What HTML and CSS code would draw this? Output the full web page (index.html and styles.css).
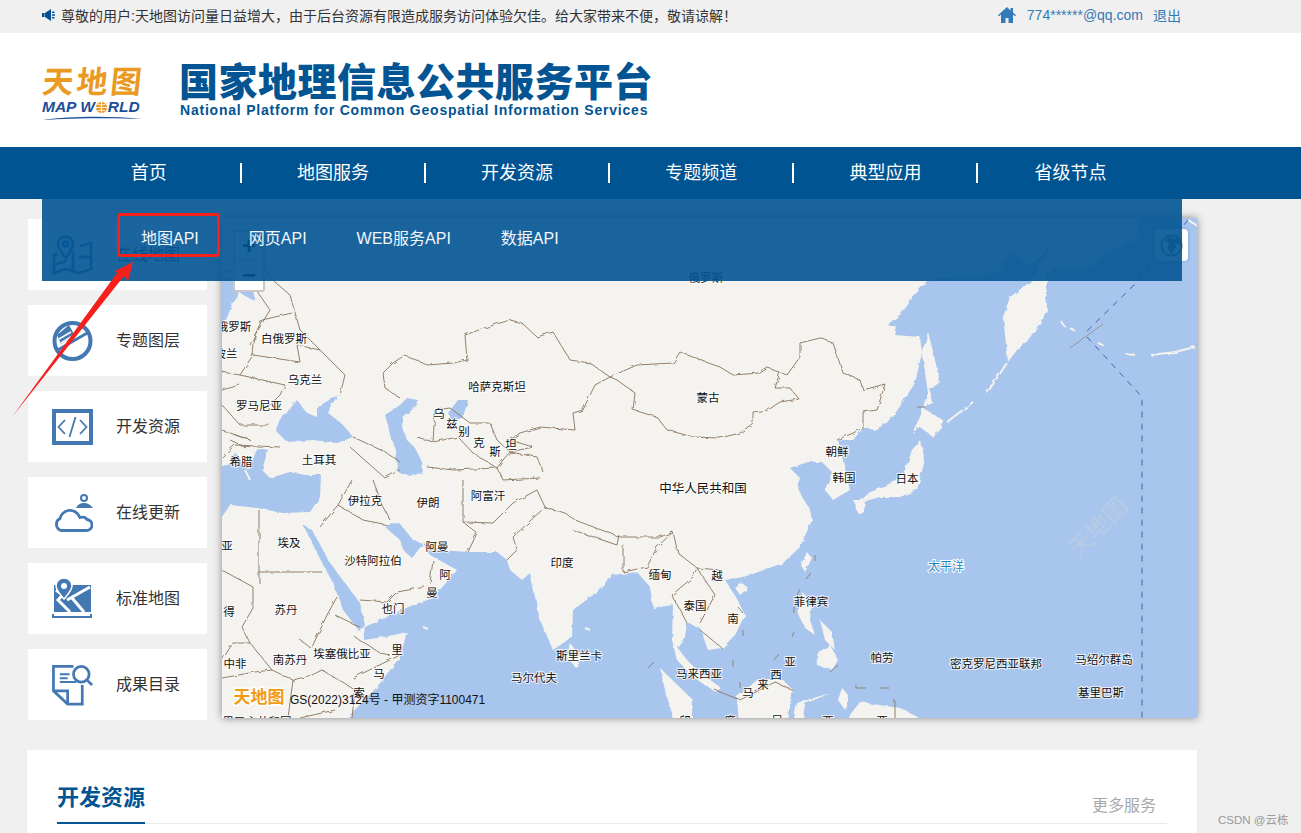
FILE: index.html
```html
<!DOCTYPE html>
<html lang="zh-CN">
<head>
<meta charset="utf-8">
<title>国家地理信息公共服务平台</title>
<link rel="stylesheet" href="styles.css">
</head>
<body>
<div class="topbar">
  <div class="notice">
    <svg class="speaker" viewBox="0 0 13 12"><path d="M0 4h2.500v4H0zM3 4l6-4v12L3 8z"/><path d="M10 2.500h2.500v1.500H10zM10 5.200h3v1.600h-3zM10 8h2.500v1.500H10z"/></svg>
    <span>尊敬的用户:天地图访问量日益增大&#65292;由于后台资源有限造成服务访问体验欠佳。给大家带来不便&#65292;敬请谅解&#65281;</span>
  </div>
  <div class="user">
    <svg class="home" viewBox="0 0 18 16"><path d="M9 0 0 8.200l1 1.100L3 7.600V16h4.500v-5h3v5H15V7.600l2 1.700 1-1.100-3-2.700V1h-2.500v2.500z"/></svg>
    <a class="mail">774******@qq.com</a>
    <a class="logout">退出</a>
  </div>
</div>

<header class="brand">
  <div class="logo">
    <div class="logo-cn">天地图</div>
    <div class="logo-en">MAP W<svg class="logo-globe" viewBox="0 0 12 12"><circle cx="6" cy="6" r="5.500"/><path d="M0 6h12M6 0v12M2 2.500c2 1.500 6 1.500 8 0M2 9.500c2-1.500 6-1.500 8 0"/></svg>RLD</div>
    <svg class="logo-swoosh" viewBox="0 0 100 4"><path d="M0 4C30 0 70 0 100 3C70 1.500 30 2 0 4z"/></svg>
  </div>
  <div class="site-title">
    <div class="title-cn">国家地理信息公共服务平台</div>
    <div class="title-en">National Platform for Common Geospatial Information Services</div>
  </div>
</header>

<nav class="nav">
  <ul class="nav-list">
    <li class="nav-item">首页</li>
    <li class="nav-item">地图服务</li>
    <li class="nav-item">开发资源</li>
    <li class="nav-item">专题频道</li>
    <li class="nav-item">典型应用</li>
    <li class="nav-item">省级节点</li>
  </ul>
  <div class="submenu">
    <a>地图API</a><a>网页API</a><a>WEB服务API</a><a>数据API</a>
  </div>
</nav>

<main class="content">
  <aside class="side">
    <div class="card">
      <svg class="ico" viewBox="0 0 41 40"><path class="ln" d="M6 19 2 20v18l12-4 13 4 12-4V8l-11 3M21 16v20M27 22h12M2 30l12-4"/><path class="ln" d="M14 23C9 17 6 13 6 9a7.500 7.500 0 0 1 15 0c0 4-3 8-7 14z"/><circle class="ln" cx="13.500" cy="9" r="2.500"/></svg>
      <span>在线地图</span>
    </div>
    <div class="card">
      <svg class="ico" viewBox="0 0 41 40"><circle class="ln4" cx="20.500" cy="20" r="18"/><path class="fl" d="M5 14 17 4l6 11-14 8z"/><path class="wh" d="M7 18l12-7M9 22l13-8"/><path class="ln" d="M4 30 37 11"/></svg>
      <span>专题图层</span>
    </div>
    <div class="card">
      <svg class="ico" viewBox="0 0 41 36"><rect class="ln4" x="2" y="2" width="37" height="32"/><path class="thin" d="M13 11 6.500 18 13 25M28 11l6.500 7L28 25M23.500 8 17.500 28"/></svg>
      <span>开发资源</span>
    </div>
    <div class="card">
      <svg class="ico" viewBox="0 0 41 40"><path class="ln" d="M9 37.500H34a5.500 5.500 0 0 0 1-11c-1-2-4-3-7-2-2-5-7-8-12-7-4 1-7 4-8 8a6.500 6.500 0 0 0 1 12z"/><circle class="ln2" cx="32" cy="5" r="3"/><path class="fl" d="M24 15c2-4 5-5 8-5s6 1 9 5z"/></svg>
      <span>在线更新</span>
    </div>
    <div class="card">
      <svg class="ico" viewBox="0 0 41 42"><path class="fl" d="M2 7h37v27H2z"/><path class="wh3" d="M18 9 6 22l12 12M38 9 15 22M20 20l12 14M4 12l4 3"/><path class="fl halo" d="M12 21C7 15 4 12 4 8a8 8 0 0 1 16 0c0 4-3 7-8 13z"/><circle class="dot" cx="12" cy="8" r="3"/><path class="ln2" d="M1 36v3h38v-3"/></svg>
      <span>标准地图</span>
    </div>
    <div class="card">
      <svg class="ico" viewBox="0 0 42 42"><path class="ln" d="M22 2H1.500v25L16 40.500h15V21"/><path class="ln" d="M2 27h14v13"/><path class="ln2" d="M8 10h10M8 14h8M8 18h17"/><circle class="ln" cx="30" cy="10" r="8"/><path class="ln" d="m36 16 5 5"/></svg>
      <span>成果目录</span>
    </div>
  </aside>

  <section class="map">
    <svg class="map-canvas" viewBox="222 218 975 500">
      <defs>
        <filter id="rough" filterUnits="userSpaceOnUse" x="180" y="180" width="1060" height="580" color-interpolation-filters="sRGB"><feTurbulence type="fractalNoise" baseFrequency="0.14" numOctaves="2" seed="4"/><feDisplacementMap in="SourceGraphic" scale="3.500"/></filter>
      </defs>
      <rect class="sea" x="222" y="218" width="975" height="500"/>
      <g filter="url(#rough)">
        <path class="land" d="M200 200H1133L1140 238 1107 252 1087 270 1063 267 1047 273 1047 283 1045 297 1047 310 1040 323 1028 340 1017 350 1008 362 1003 317 1010 297 1030 282 1040 265 1053 240 1040 258 1028 265 1010 252 995 275 977 277 933 278 927 281 913 297 902 313 887 325 897 327 895 335 920 337 922 353 915 383 893 417 877 430 863 428 853 440 838 440 843 460 850 490 833 500 825 490 832 472 822 462 808 462 790 468 800 478 797 487 810 510 812 520 800 547 783 563 750 575 738 578 725 580 735 595 745 615 735 635 722 648 708 650 700 628 687 623 685 637 677 647 687 660 697 670 720 687 717 693 693 677 677 660 672 640 673 605 653 608 650 587 637 572 613 575 593 595 573 610 572 637 553 650 540 620 530 573 522 580 510 570 507 560 497 552 467 552 440 550 423 543 430 555 457 570 433 598 413 605 365 627 363 640 385 637 407 632 400 657 377 687 347 718 347 740H200Z"/>
        <path class="sea-f" d="M222 517 230 505 257 508 283 513 310 512 320 497 321 475 305 475 290 472 270 478 262 470 268 450 258 448 252 460 248 470 235 452 228 465 200 470V517Z"/>
        <path class="sea-f" d="M275 430 283 417 297 400 307 413 317 417 317 407 338 395 327 412 343 425 353 437 337 443 313 440 287 442Z"/>
        <path class="sea-f" d="M385 415 400 405 407 398 418 400 412 410 403 416 402 425 407 440 415 448 422 462 423 472 412 476 397 472 396 450 390 435 388 425Z"/>
        <path class="sea-f" d="M448 413 458 400 468 400 463 417 453 422Z"/>
        <path class="sea-f" d="M200 275 250 281 256 302 240 293 232 305 226 320 200 330Z"/>
        <path class="sea-f" d="M392 523 400 524 413 540 423 544 412 558 405 552 400 540 385 527Z"/>
        <path class="sea-f" d="M303 525 312 530 330 563 345 583 360 603 365 625 360 632 343 610 333 583 317 553Z"/>
        <path class="land" d="M928 332 932 347 940 382 930 390 933 403 923 407 928 393 922 353ZM923 408 943 420 942 428 933 437 920 427 912 433 920 417ZM920 440 925 460 917 490 900 497 880 497 858 503 870 492 890 485 905 470 912 450ZM853 500 867 500 863 513 858 513ZM807 552 812 558 805 572 801 565ZM742 583 748 588 740 595 735 588ZM570 643 583 660 575 667 567 657ZM803 593 812 602 810 620 815 635 805 628 797 612ZM817 653 830 645 838 660 832 670 818 666ZM820 620 832 632 835 650 825 640ZM737 697 757 680 783 680 793 690 783 740H740ZM660 668 693 700 690 740H680L665 690ZM797 703 830 693 805 704 800 740H790ZM860 702 900 708 933 725V740H840L850 715 ZM842 688 848 695 845 710 838 700Z"/>
        <path class="isl" d="M947 422 960 412 973 402M987 393 997 378 1007 363M1060 320 1065 327M1070 328 1076 332M1098 343 1103 345M1125 353 1135 355M1151 355 1175 352 1195 347M245 470 250 480M585 628 590 630M423 627 428 629M1198 226 1188 220"/>
      </g>
      <g class="borders" filter="url(#rough)">
        <path d="M383 373 393 363 405 355 427 365 453 363 467 360 465 335 487 327 510 320 522 323 537 337 553 332 570 360 590 363 610 377 637 365 673 363 680 352 700 360 720 367 733 375 760 373 768 368 787 375 800 357 800 343 820 338 833 343 843 373 860 380 863 390 885 384 877 410 863 412 863 428 853 433 837 440"/>
        <path d="M780 372 775 388 790 388 799 399 780 402 768 410 753 412 753 423 740 433 720 438 693 437 667 430 657 417 633 410 635 393 617 380 610 377"/>
        <path d="M610 377 595 385 590 395 583 410 573 413 575 430 540 427 520 433 510 440 533 447 510 452 497 440 490 423 470 423 450 408 435 410 433 442 417 437M433 442 458 437 473 453 497 468 503 460 510 452 537 457 543 472M427 467 453 470 497 468 503 480 540 478"/>
        <path d="M383 373 385 388 395 395 400 398M222 272 260 265 275 282 290 295 300 330 320 350 345 375 340 395M250 281 270 310 255 335 253 355 240 375 222 372M253 355 300 362 297 345 320 350M250 345 262 320 292 313M240 375 285 385 280 395 267 408M240 385 222 390M222 405 240 425 270 425M222 430 250 440 235 435M230 440 245 447M222 457 235 445 280 447M353 437 385 452 400 462M350 447 385 478 400 470"/>
        <path d="M463 480 463 522 477 533 468 552M463 522 493 523 513 503 537 490 545 507 513 537 517 550 507 560M545 507 565 513 575 520 620 537 660 537 673 532 678 553 697 568 720 570M573 530 617 545 619 535M623 545 623 572 647 567 657 547 673 532M697 568 693 577 672 595 687 623M697 568 715 595 700 623M722 648 700 630M320 527 338 505 352 480M373 480 383 507 390 520M338 505 363 520 388 525M360 600 387 602 397 592 425 587M433 560 430 583"/>
        <path d="M259 510 259 583M222 570 253 587 253 608 242 627 250 643M259 572H322M233 643 250 643 272 670 293 680 312 675 322 670 355 690M222 660 233 643M312 647 327 615 337 597M335 615 360 627M355 637 380 653 390 655M400 655 353 678M293 680 288 718M300 718 335 710M222 678 255 672 272 670M355 690 352 718M300 640 310 647"/>
        <path d="M715 690 740 700 775 682 793 690M895 718V700"/>
      </g>
      <path class="dash-blue" d="M1188 220 1137 282 1083 335M1087 337 1142 397V718"/>
      <path class="gray-line" d="M1070 348 1103 324"/>
      <path class="dash-gray" d="M815 555v6M806 579l5-6M797 595l3-6M794 607v6M792 637l2-5M774 660l5-6M733 660v7M740 682v6M856 685v3h10M880 688h9M830 672l8-7M738 607l5 6M743 630v6M648 668l6-6M917 407h8"/>
      <g class="labels">
        <text x="706" y="277">俄罗斯</text>
        <text x="234" y="326">俄罗斯</text><text x="284" y="338">白俄罗斯</text><text x="226" y="353">波兰</text><text x="305" y="379">乌克兰</text><text x="259" y="405">罗马尼亚</text><text x="241" y="461">希腊</text><text x="319" y="459">土耳其</text>
        <text x="497" y="386">哈萨克斯坦</text><text x="439" y="413">乌</text><text x="452" y="423">兹</text><text x="464" y="431">别</text><text x="479" y="442">克</text><text x="495" y="451">斯</text><text x="511" y="444">坦</text>
        <text x="708" y="397">蒙古</text><text x="703" y="487" class="big">中华人民共和国</text><text x="837" y="451">朝鲜</text><text x="844" y="477">韩国</text><text x="907" y="478">日本</text>
        <text x="365" y="500">伊拉克</text><text x="428" y="502">伊朗</text><text x="488" y="495">阿富汗</text><text x="227" y="545">亚</text><text x="289" y="542">埃及</text><text x="373" y="560">沙特阿拉伯</text><text x="437" y="546">阿曼</text><text x="445" y="574">阿</text><text x="432" y="592">曼</text><text x="393" y="608">也门</text>
        <text x="562" y="562">印度</text><text x="660" y="574">缅甸</text><text x="717" y="575">越</text><text x="695" y="605">泰国</text><text x="733" y="618">南</text><text x="811" y="601">菲律宾</text><text x="946" y="565" class="ocean">太平洋</text>
        <text x="229" y="611">得</text><text x="286" y="609">苏丹</text><text x="342" y="653">埃塞俄比亚</text><text x="235" y="663">中非</text><text x="290" y="659">南苏丹</text><text x="397" y="649">里</text><text x="379" y="673">马</text><text x="359" y="692">索</text>
        <text x="579" y="655">斯里兰卡</text><text x="534" y="677">马尔代夫</text><text x="699" y="673">马来西亚</text><text x="790" y="661">亚</text><text x="776" y="674">西</text><text x="763" y="684">来</text><text x="748" y="692">马</text>
        <text x="882" y="657">帕劳</text><text x="996" y="663">密克罗尼西亚联邦</text><text x="1104" y="659">马绍尔群岛</text><text x="1101" y="692">基里巴斯</text>
        <text x="685" y="720">印</text><text x="730" y="720">度</text><text x="777" y="720">尼</text><text x="828" y="720">西</text><text x="882" y="720">亚</text><text x="257" y="721">果民主共和国</text>
      </g>
      <text class="wm" x="0" y="0" transform="translate(1104 533) rotate(-45)">天地图</text>
      <text class="map-logo" x="259" y="703">天地图</text>
      <text class="copy" x="290" y="704">GS(2022)3124号 - 甲测资字1100471</text>
    </svg>
    <div class="zoom-ctl"><div class="zoom-btn">+</div><div class="zoom-btn">−</div></div>
    <div class="globe-btn">
      <svg viewBox="0 0 24 24"><circle cx="12" cy="12" r="10.500"/><path d="M9 3 6 7l3 2 2 3-3 1 2 4 2 4 2-5 3-3-3-2 4-1 3-1-3-4-4 1z"/></svg>
    </div>
  </section>
</main>

<section class="panel">
  <div class="panel-head">
    <h2 class="panel-title">开发资源</h2>
    <a class="panel-more">更多服务</a>
  </div>
</section>

<svg class="annot" viewBox="0 0 1301 833">
  <rect class="annot-box" x="118.500" y="214.500" width="100" height="41" rx="2"/>
  <path class="annot-arrow" d="M12 417 117 273 115 271 133 262 128 281 124 276Z"/>
</svg>
<div class="watermark">CSDN @云栋</div>
</body>
</html>
```
FILE: styles.css
```css
* { box-sizing: border-box; }
html, body { height: 833px; overflow: hidden; }
body {
  margin: 0;
  background: #f0f0f0;
  color: #333;
  font-family: "Liberation Sans", "Noto Sans CJK SC", sans-serif;
  font-size: 14px;
  position: relative;
}
.topbar {
  height: 33px;
  display: flex;
  align-items: center;
  justify-content: space-between;
  padding: 0 120px 3px 42px;
}
.notice { display: flex; align-items: center; gap: 6px; }
.speaker { width: 13px; height: 12px; fill: #02508f; }
.user { display: flex; align-items: center; color: #337ab7; }
.home { width: 18px; height: 16px; fill: #337ab7; margin-right: 11px; }
.mail { margin-right: 10px; }
.brand {
  height: 114px;
  background: #fff;
  display: flex;
  align-items: flex-start;
  padding-left: 42px;
}
.logo { width: 100px; margin-top: 28px; margin-right: 37px; }
.logo-cn {
  font-family: "Noto Sans CJK SC", sans-serif;
  font-size: 31px;
  line-height: 37px;
  font-weight: 700;
  color: #ea9a22;
  letter-spacing: 3px;
  margin-left: 1px;
  white-space: nowrap;
  transform: skewX(-6deg);
}
.logo-en {
  display: flex;
  align-items: center;
  height: 18px;
  font-size: 15.500px;
  font-weight: 700;
  font-style: italic;
  color: #1b4e9b;
  white-space: nowrap;
}
.logo-globe { width: 13px; height: 13px; fill: #ea9a22; stroke: #fff; stroke-width: .8; }
.logo-swoosh { display: block; width: 100px; height: 4px; fill: #1b4e9b; }
.site-title { margin-top: 23px; color: #035492; }
.title-cn {
  font-family: "Noto Sans CJK SC", sans-serif;
  font-size: 39px;
  font-weight: 900;
  line-height: 46px;
  letter-spacing: .5px;
  white-space: nowrap;
}
.title-en {
  font-size: 14px;
  font-weight: 700;
  line-height: 15px;
  margin-top: 1px;
  margin-left: 1px;
  letter-spacing: .79px;
  white-space: nowrap;
}
.nav { height: 52px; background: #015492; position: relative; z-index: 2; }
.nav-list {
  list-style: none;
  margin: 0;
  padding: 0 0 0 57.700px;
  display: flex;
  height: 100%;
  align-items: center;
}
.nav-item {
  width: 184.170px;
  height: 20px;
  line-height: 20px;
  text-align: center;
  color: #fff;
  font-size: 18px;
  border-right: 2px solid #fff;
}
.nav-item:last-child { border-right: 0; }
.submenu {
  position: absolute;
  top: 100%;
  left: 42px;
  width: 1140px;
  height: 82px;
  padding-left: 99px;
  display: flex;
  gap: 50px;
  line-height: 80px;
  background: rgba(2, 84, 148, .9);
  color: #f2f6fa;
  font-size: 16px;
}
.content { display: flex; padding: 19px 0 0 28px; }
.side { width: 179px; margin-right: 15px; padding-top: 1px; display: flex; flex-direction: column; gap: 15px; }
.card {
  height: 71px;
  background: #fff;
  display: flex;
  align-items: center;
  padding-left: 24px;
  gap: 23px;
  font-size: 16px;
}
.card span { margin-bottom: 3px; }
.ico { width: 41px; height: 42px; fill: none; stroke: #4478b2; }
.ln { fill: none; stroke-width: 2.800; }
.ln2 { fill: none; stroke-width: 2; }
.ln4 { fill: none; stroke-width: 4; }
.thin { fill: none; stroke-width: 1.800; }
.fl { fill: #4478b2; stroke: none; }
.wh { fill: none; stroke: #fff; stroke-width: 1.500; }
.wh3 { fill: none; stroke: #fff; stroke-width: 3; }
.halo { stroke: #fff; stroke-width: 1.500; }
.dot { fill: #fff; stroke: none; }
.map {
  position: relative;
  width: 975px;
  height: 500px;
  overflow: hidden;
  box-shadow: 0 0 8px rgba(0, 0, 0, .45);
}
.map-canvas { display: block; width: 975px; height: 500px; }
.sea { fill: #a8c5ee; }
.sea-f { fill: #a8c5ee; }
.land { fill: #f5f3ef; }
.isl { fill: none; stroke: #f5f3ef; stroke-width: 2; }
.borders path { fill: none; stroke: #917f6a; stroke-width: 1; }
.dash-blue { fill: none; stroke: #3c64aa; stroke-width: 1; stroke-dasharray: 6 6; }
.gray-line { fill: none; stroke: #98969a; stroke-width: 1; }
.dash-gray { fill: none; stroke: #8f8577; stroke-width: 1; }
.labels text {
  font-family: "Noto Sans CJK SC", sans-serif;
  font-size: 11.500px;
  text-anchor: middle;
  dominant-baseline: central;
  fill: #111;
  stroke: #fff;
  stroke-width: 2px;
  stroke-opacity: .75;
  paint-order: stroke;
}
.labels .big { font-size: 12.500px; }
.labels .ocean { font-size: 12px; fill: #1f86bd; stroke-opacity: 1; }
.wm {
  font-family: "Noto Sans CJK SC", sans-serif;
  font-size: 24px;
  text-anchor: middle;
  fill: #c4cfdd;
  opacity: .6;
}
.map-logo {
  font-family: "Noto Sans CJK SC", sans-serif;
  font-size: 17px;
  font-weight: 700;
  text-anchor: middle;
  fill: #f39a14;
  stroke: #fff;
  stroke-width: 3px;
  paint-order: stroke;
}
.copy { font-family: "Liberation Sans", "Noto Sans CJK SC", sans-serif; font-size: 12px; fill: #111; }
.zoom-ctl {
  position: absolute;
  left: 11px;
  top: 12px;
  width: 32px;
  height: 62px;
  background: #fff;
  border: 2px solid #c8c8c8;
  border-radius: 3px;
}
.zoom-btn {
  height: 29px;
  text-align: center;
  font: 700 24px/28px "Liberation Sans", sans-serif;
  color: #000;
  border-bottom: 1px solid #ccc;
}
.zoom-btn:last-child { border-bottom: 0; }
.globe-btn {
  position: absolute;
  left: 933px;
  top: 11px;
  width: 33px;
  height: 32px;
  background: #fff;
  border-radius: 4px;
  padding: 5px;
  box-shadow: 0 0 3px rgba(0, 0, 0, .25);
}
.globe-btn svg { display: block; width: 23px; height: 23px; fill: #777; stroke: #777; stroke-width: 1; }
.globe-btn circle { fill: none; stroke-width: 2; }
.panel {
  width: 1170px;
  height: 83px;
  margin: 30px 0 0 27px;
  background: #fff;
  padding: 30px 30px 0;
}
.panel-head {
  height: 44px;
  display: flex;
  justify-content: space-between;
  border-bottom: 1px solid #e9e9e9;
}
.panel-title {
  margin: 0;
  height: 44px;
  line-height: 36px;
  font-size: 22px;
  font-weight: 700;
  color: #015492;
  border-bottom: 2px solid #015492;
}
.panel-more { margin-right: 11px; padding-top: 16px; font-size: 16px; color: #a8a8a8; line-height: 20px; }
.annot { position: absolute; left: 0; top: 0; width: 1301px; height: 833px; pointer-events: none; z-index: 3; }
.annot-box { fill: none; stroke: #f5201c; stroke-width: 3; }
.annot-arrow { fill: #f5201c; }
.watermark { position: absolute; left: 1218px; top: 811px; font-size: 11.500px; color: #999; z-index: 3; }
```
